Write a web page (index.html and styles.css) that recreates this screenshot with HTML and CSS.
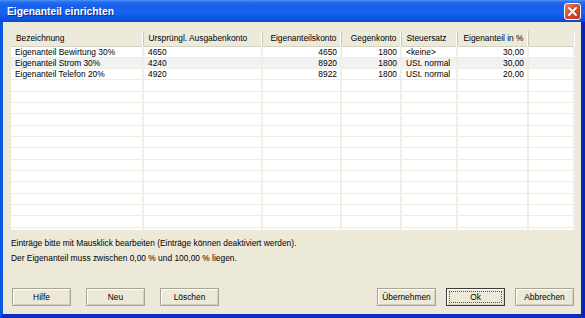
FILE: index.html
```html
<!DOCTYPE html>
<html lang="de">
<head>
<meta charset="UTF-8">
<meta name="viewport" content="width=device-width, initial-scale=1.0">
<title>Eigenanteil einrichten</title>
<link rel="stylesheet" href="styles.css">
</head>
<body>
<div class="window">
  <div class="titlebar">
    <span class="title">Eigenanteil einrichten</span>
    <button class="close" type="button" aria-label="Schließen">
      <svg width="9" height="9" viewBox="0 0 9 9"><path d="M1 1 L8 8 M8 1 L1 8" stroke="#fff" stroke-width="1.8" stroke-linecap="round"/></svg>
    </button>
  </div>
  <div class="client">
    <div class="grid">
      <table>
        <colgroup>
          <col class="c-name">
          <col class="c-orig">
          <col class="c-konto">
          <col class="c-gegen">
          <col class="c-steuer">
          <col class="c-anteil">
          <col>
        </colgroup>
        <thead>
          <tr>
            <th>Bezeichnung</th>
            <th>Ursprüngl. Ausgabenkonto</th>
            <th class="num">Eigenanteilskonto</th>
            <th class="num">Gegenkonto</th>
            <th>Steuersatz</th>
            <th class="num">Eigenanteil in %</th>
            <th class="last"></th>
          </tr>
        </thead>
        <tbody id="rows">
          <tr><td>Eigenanteil Bewirtung 30%</td><td>4650</td><td class="num">4650</td><td class="num">1800</td><td>&lt;keine&gt;</td><td class="num">30,00</td><td></td></tr>
          <tr class="hover"><td>Eigenanteil Strom 30%</td><td>4240</td><td class="num">8920</td><td class="num">1800</td><td>USt. normal</td><td class="num">30,00</td><td></td></tr>
          <tr><td>Eigenanteil Telefon 20%</td><td>4920</td><td class="num">8922</td><td class="num">1800</td><td>USt. normal</td><td class="num">20,00</td><td></td></tr>
        </tbody>
      </table>
    </div>
    <div class="hints">
      <p>Einträge bitte mit Mausklick bearbeiten (Einträge können deaktiviert werden).</p>
      <p>Der Eigenanteil muss zwischen 0,00 % und 100,00 % liegen.</p>
    </div>
    <div class="buttons">
      <div class="group">
        <button type="button" class="btn">Hilfe</button>
        <button type="button" class="btn">Neu</button>
        <button type="button" class="btn">Löschen</button>
      </div>
      <div class="group right">
        <button type="button" class="btn">Übernehmen</button>
        <button type="button" class="btn default"><span>Ok</span></button>
        <button type="button" class="btn">Abbrechen</button>
      </div>
    </div>
  </div>
</div>
<script>
  // empty rows fill the rest of the list
  var body = document.getElementById("rows");
  for (var i = 0; i < 14; i++) {
    var tr = document.createElement("tr");
    for (var j = 0; j < 7; j++) {
      tr.appendChild(document.createElement("td"));
    }
    body.appendChild(tr);
  }
</script>
</body>
</html>
```

FILE: styles.css
```css
body {
  margin: 0;
  font-family: "Liberation Sans", Arial, sans-serif;
  font-size: 8.4px;
  color: #000;
  background: #fff;
}
.window {
  width: 585px;
  height: 318px;
  display: flex;
  flex-direction: column;
}
.titlebar {
  height: 22px;
  flex: none;
  display: flex;
  align-items: center;
  justify-content: space-between;
  padding: 0 4px 0 7px;
  background: linear-gradient(#4b95f8 0, #2a6cee 2px, #1560ea 6px, #1764ee 12px, #0d55e2 18px, #0a47cf 22px);
}
.title {
  color: #fff;
  font-weight: bold;
  font-size: 10.3px;
  text-shadow: 1px 1px #0b2d96;
  padding-top: 1px;
}
.close {
  width: 17px;
  height: 17px;
  margin-top: 1px;
  padding: 0;
  border: 1px solid #fff;
  border-radius: 3px;
  background: linear-gradient(135deg, #ea7b5c, #d3502d 50%, #bf3814);
  display: flex;
  align-items: center;
  justify-content: center;
}
.client {
  flex: 1;
  background: #ece9d8;
  border-style: solid;
  border-width: 0 4px 4px 3px;
  border-color: #0a47d6 #0726b4 #0a30c0 #0b56e2;
  padding: 9px 6px 0 8px;
}
.grid {
  height: 199px;
  overflow: hidden;
  background: #fff;
}
table {
  width: 100%;
  border-collapse: collapse;
  table-layout: fixed;
}
.c-name { width: 132px; }
.c-orig { width: 119px; }
.c-konto { width: 79px; }
.c-gegen { width: 60px; }
.c-steuer { width: 56px; }
.c-anteil { width: 71px; }
th {
  height: 15px;
  padding: 0 4px 0 5px;
  box-sizing: border-box;
  background: #ebeadb;
  font-weight: normal;
  text-align: left;
  white-space: nowrap;
  border-bottom: 1px solid #d6d2c2;
  border-right: 1px solid #c9c6b6;
  box-shadow: inset -1px 0 #fff;
}
th.last {
  border-right: none;
  box-shadow: none;
}
td {
  height: 11.33px;
  padding: 0 3px 0 4px;
  box-sizing: border-box;
  white-space: nowrap;
  overflow: hidden;
  line-height: 10px;
  border-bottom: 1px solid #efede3;
  border-right: 2px solid #f1efe5;
}
.num {
  text-align: right;
}
th.num {
  padding-right: 4px;
}
tr.hover td {
  background: #f2f2f2;
}
.hints {
  margin: 6px 0 0 0;
}
.hints p {
  margin: 0;
  line-height: 15px;
}
.buttons {
  display: flex;
  justify-content: space-between;
  margin-top: 22px;
  padding-left: 1px;
}
.group {
  display: flex;
  gap: 15px;
}
.group.right {
  gap: 10px;
  padding-right: 1px;
}
.btn {
  width: 59px;
  height: 18px;
  padding: 0;
  font-family: inherit;
  font-size: 8.4px;
  color: #000;
  background: #ece9d8;
  border: 1px solid #a7a597;
  box-shadow: inset 1px 1px #fff, inset -1px -1px #d4d0c0;
}
.btn.default {
  border-color: #3c3c3c;
  padding: 2px;
}
.btn.default span {
  display: block;
  height: 100%;
  box-sizing: border-box;
  border: 1px dotted #555;
  line-height: 10px;
}
```
